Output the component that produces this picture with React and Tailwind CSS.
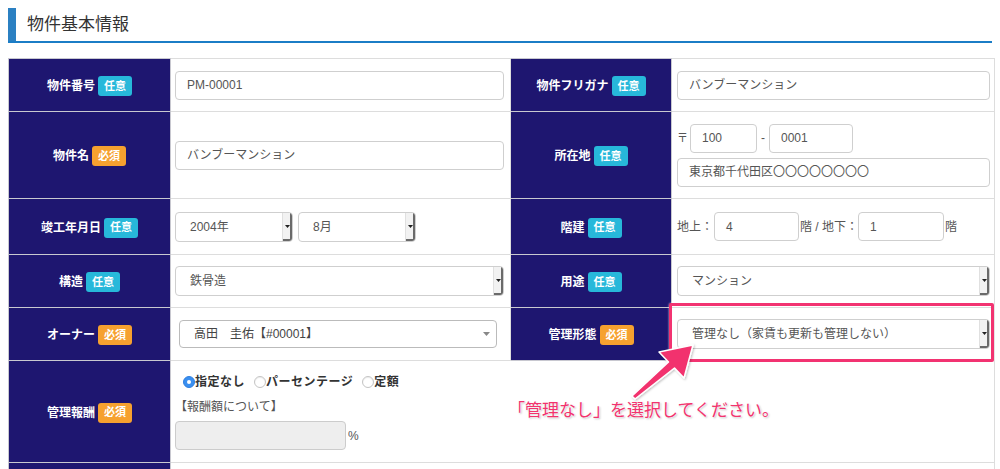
import React from "react";

const font = "font-['Liberation_Sans','Noto_Sans_CJK_JP',sans-serif]";

const Badge = ({ req }) =>
  req ? (
    <span className="inline-flex items-center justify-center h-[20px] px-[6px] rounded-[3px] bg-[#f6a12f] text-white text-[11px] font-bold">
      必須
    </span>
  ) : (
    <span className="inline-flex items-center justify-center h-[20px] px-[6px] rounded-[3px] bg-[#27b8da] text-white text-[11px] font-bold">
      任意
    </span>
  );

const Label = ({ text, req }) => (
  <td className="bg-[#1e1670] border border-[#c8c8d0] text-center align-middle">
    <div className="inline-flex items-center gap-[3px]">
      <span className="text-white text-[12px] font-bold">{text}</span>
      <Badge req={req} />
    </div>
  </td>
);

const Input = ({ value, className = "" }) => (
  <div
    className={`h-[29px] flex items-center px-[11px] border border-[#cfcfcf] rounded-[4px] bg-white text-[12px] text-[#555] ${className}`}
  >
    {value}
  </div>
);

// mac native looking select with the little arrow chunk at the right
const MacSelect = ({ value, className = "" }) => (
  <div
    className={`h-[30px] flex border border-[#cfcfcf] rounded-[4px] bg-white overflow-hidden ${className}`}
  >
    <span className="flex-1 flex items-center pl-[14px] text-[12px] text-[#555]">{value}</span>
    <span className="w-[10px] flex items-center justify-center bg-[#f2f2f2] border-l border-[#e0e0e0] shadow-[inset_-2px_-2px_0_#6a6a6a]">
      <svg width="5" height="3" viewBox="0 0 5 3" className="mb-[1px] mr-[1px]">
        <path d="M0 0h5L2.5 3z" fill="#222" />
      </svg>
    </span>
  </div>
);

const Radio = ({ checked, label }) => (
  <label className="flex items-center">
    {checked ? (
      <span className="w-[12px] h-[12px] rounded-full bg-[#3a8ff0] border border-[#2f7fe0] flex items-center justify-center">
        <span className="w-[4px] h-[4px] rounded-full bg-white" />
      </span>
    ) : (
      <span className="w-[12px] h-[12px] rounded-full bg-white border border-[#c4c4c4] shadow-[inset_0_1px_1px_rgba(0,0,0,0.08)]" />
    )}
    <span className="text-[12px] font-semibold text-[#333] tracking-[0.5px]">{label}</span>
  </label>
);

export default function App() {
  return (
    <div className={`relative w-[1000px] h-[469px] overflow-hidden bg-white ${font}`}>
      {/* section heading */}
      <div className="mx-[8px] mt-[8px] flex h-[35px] border-b-2 border-[#1b7dc6]">
        <div className="w-[8px] bg-[#2b80c2]" />
        <h2 className="pl-[11px] flex items-center text-[17px] text-[#333] font-normal pt-[1px]">
          物件基本情報
        </h2>
      </div>

      <table className="mt-[15px] ml-[8px] w-[986px] border-collapse table-fixed border border-[#ddd]">
        <colgroup>
          <col className="w-[162px]" />
          <col className="w-[340px]" />
          <col className="w-[161px]" />
          <col className="w-[323px]" />
        </colgroup>
        <tbody>
          <tr className="h-[53px]">
            <Label text="物件番号" />
            <td className="border border-[#ddd] pl-[4px] pr-[6px]">
              <Input value="PM-00001" />
            </td>
            <Label text="物件フリガナ" />
            <td className="border border-[#ddd] pl-[5px] pr-[4px]">
              <Input value="バンブーマンション" />
            </td>
          </tr>

          <tr className="h-[87px]">
            <Label text="物件名" req />
            <td className="border border-[#ddd] pl-[4px] pr-[6px]">
              <Input value="バンブーマンション" />
            </td>
            <Label text="所在地" />
            <td className="border border-[#ddd] pl-[5px] pr-[4px]">
              <div className="flex items-center text-[12px] text-[#555]">
                <span className="w-[13px] text-[11px]">〒</span>
                <Input value="100" className="w-[67px]" />
                <span className="w-[12px] text-center">-</span>
                <Input value="0001" className="w-[84px]" />
              </div>
              <Input value="東京都千代田区〇〇〇〇〇〇〇〇" className="mt-[5px]" />
            </td>
          </tr>

          <tr className="h-[56px]">
            <Label text="竣工年月日" />
            <td className="border border-[#ddd] pl-[4px] pr-[6px]">
              <div className="flex gap-[5px]">
                <MacSelect value="2004年" className="w-[118px]" />
                <MacSelect value="8月" className="w-[118px]" />
              </div>
            </td>
            <Label text="階建" />
            <td className="border border-[#ddd] pl-[5px] pr-[4px]">
              <div className="flex items-center text-[12px] text-[#555] whitespace-nowrap">
                <span className="w-[37px]">地上：</span>
                <Input value="4" className="w-[85px] shrink-0" />
                <span className="w-[59px] shrink-0 pl-[1px]">階 / 地下：</span>
                <Input value="1" className="w-[86px] shrink-0" />
                <span className="pl-[1px]">階</span>
              </div>
            </td>
          </tr>

          <tr className="h-[53px]">
            <Label text="構造" />
            <td className="border border-[#ddd] pl-[4px] pr-[6px]">
              <MacSelect value="鉄骨造" />
            </td>
            <Label text="用途" />
            <td className="border border-[#ddd] pl-[5px] pr-[4px]">
              <MacSelect value="マンション" />
            </td>
          </tr>

          <tr className="h-[53px]">
            <Label text="オーナー" req />
            <td className="border border-[#ddd] pl-[8px] pr-[13px]">
              <div className="h-[28px] flex items-center border border-[#bbb] rounded-[4px] pl-[14px] pr-[6px] text-[12px] text-[#444]">
                <span className="flex-1">高田　圭佑【#00001】</span>
                <svg width="7" height="4" viewBox="0 0 7 4">
                  <path d="M0 0h7L3.5 4z" fill="#888" />
                </svg>
              </div>
            </td>
            <Label text="管理形態" req />
            <td className="border border-[#ddd] pl-[5px] pr-[4px]">
              <MacSelect value="管理なし（家賃も更新も管理しない）" />
            </td>
          </tr>

          <tr className="h-[102px]">
            <Label text="管理報酬" req />
            <td colSpan={3} className="border border-[#ddd] pl-[4px] align-top pt-[12px]">
              <div className="flex items-center gap-[9px] pl-[8px]">
                <Radio checked label="指定なし" />
                <Radio label="パーセンテージ" />
                <Radio label="定額" />
              </div>
              <div className="mt-[7px] text-[12px] text-[#555]">【報酬額について】</div>
              <div className="mt-[5px] flex items-center">
                <div className="w-[171px] h-[29px] border border-[#ccc] rounded-[4px] bg-[#eee]" />
                <span className="pl-[2px] text-[12px] text-[#555]">%</span>
              </div>
            </td>
          </tr>

          <tr className="h-[40px]">
            <td className="bg-[#1e1670] border border-[#c8c8d0]" />
            <td colSpan={3} className="border border-[#ddd]" />
          </tr>
        </tbody>
      </table>

      {/* annotation overlay */}
      <div className="absolute left-[669px] top-[303px] w-[325px] h-[59px] border-[3px] border-[#f23371] rounded-[2px] shadow-[0_0_2px_rgba(255,255,255,0.9)] pointer-events-none" />
      <svg className="absolute left-0 top-0 pointer-events-none" width="1000" height="469">
        <defs>
          <filter id="sh" x="-20%" y="-20%" width="140%" height="140%">
            <feDropShadow dx="1" dy="1" stdDeviation="1" floodColor="#000" floodOpacity="0.25" />
          </filter>
        </defs>
        <polygon
          points="693,345 684,378 674.5,368 635,399 632,396 668.5,362 659,352"
          fill="#f2336e"
          stroke="#fff"
          strokeWidth="1.5"
          strokeLinejoin="round"
          filter="url(#sh)"
        />
      </svg>
      <div className="absolute left-[508px] top-[398px] text-[17px] text-[#f2336e] [text-shadow:0_0_2px_#fff,0_0_2px_#fff,1px_1px_2px_rgba(0,0,0,0.3)]">
        「管理なし」を選択してください。
      </div>
    </div>
  );
}
